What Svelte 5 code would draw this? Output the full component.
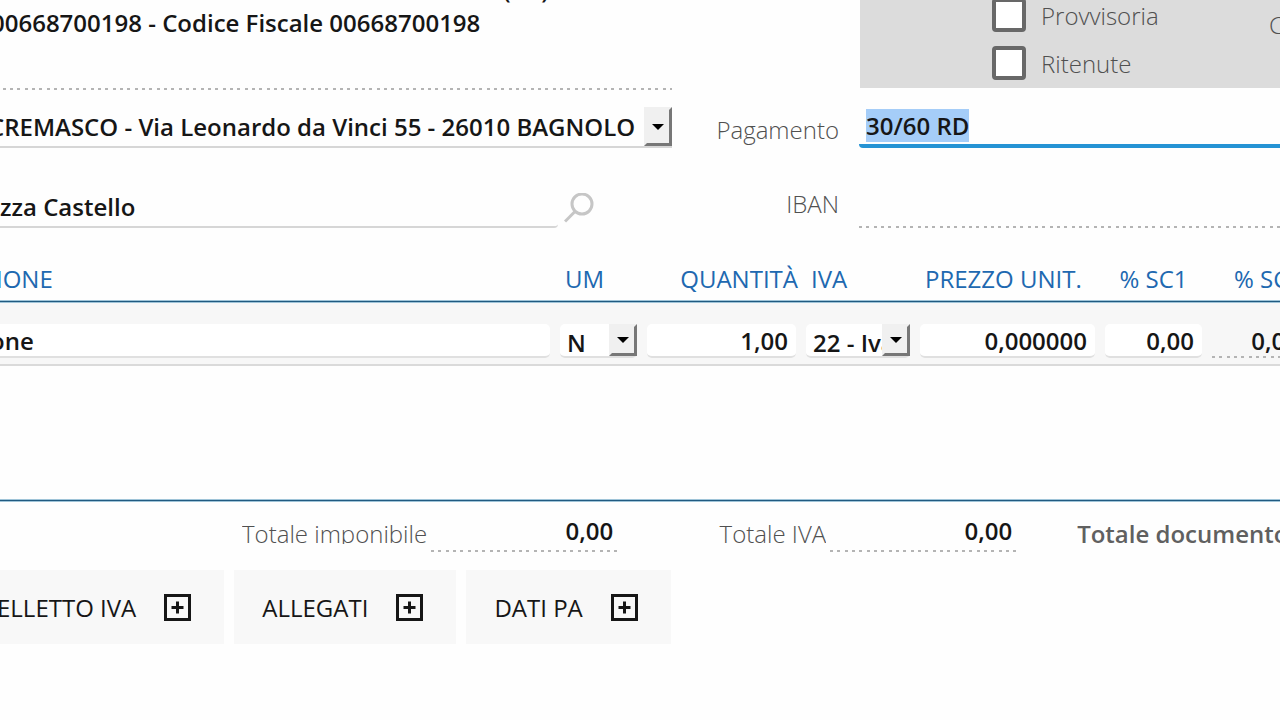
<script lang="ts">
  import { onMount } from 'svelte';

  let payment = $state('30/60 RD');
  let paymentInput: HTMLInputElement;

  const flags = $state([
    { id: 'provvisoria', label: 'Provvisoria', checked: false },
    { id: 'ritenute', label: 'Ritenute', checked: false }
  ]);

  const totals = [
    { id: 'imponibile', label: 'Totale imponibile', value: '0,00' },
    { id: 'iva', label: 'Totale IVA', value: '0,00' }
  ];

  const sections = ['ELLETTO IVA', 'ALLEGATI', 'DATI PA'];

  // The payment terms are ready to be overwritten as soon as the form opens.
  onMount(() => {
    paymentInput.focus({ preventScroll: true });
    paymentInput.select();
  });
</script>

{#snippet arrow()}
  <span class="arrow" aria-hidden="true">
    <svg width="12" height="6" viewBox="0 0 12 6"><path d="M0 0h12L6 6z" /></svg>
  </span>
{/snippet}

<main>
  <div class="sheet">
    <div class="top">
      <div class="column">
        <div class="company dotted">
          <div class="province">(CR)</div>
          <div>00668700198 - Codice Fiscale 00668700198</div>
        </div>

        <div class="select field">
          <select aria-label="Sede">
            <option>CREMASCO - Via Leonardo da Vinci 55 - 26010 BAGNOLO</option>
          </select>
          {@render arrow()}
        </div>

        <div class="destination">
          <input class="field" aria-label="Destinazione" value="zza Castello" />
          <button type="button" class="search" aria-label="Cerca">
            <svg width="30" height="30" viewBox="0 0 30 30">
              <circle cx="18" cy="11" r="10" />
              <path d="M11 18.5L1 28.5" />
            </svg>
          </button>
        </div>
      </div>

      <div class="column">
        <div class="panel">
          <div class="flags">
            {#each flags as flag (flag.id)}
              <label>
                <input type="checkbox" bind:checked={flag.checked} />
                {flag.label}
              </label>
            {/each}
          </div>
          <span class="side">C</span>
        </div>

        <div class="row">
          <label class="low" for="pagamento">Pagamento</label>
          <input
            id="pagamento"
            class="field payment"
            bind:this={paymentInput}
            bind:value={payment}
          />
        </div>

        <div class="row">
          <label for="iban">IBAN</label>
          <input id="iban" class="field dotted" readonly />
        </div>
      </div>
    </div>

    <div class="lines">
      <table>
        <colgroup>
          <col class="c-desc" />
          <col class="c-um" />
          <col class="c-qty" />
          <col class="c-iva" />
          <col class="c-price" />
          <col class="c-sc" />
          <col />
        </colgroup>
        <thead>
          <tr>
            <th class="desc">IONE</th>
            <th>UM</th>
            <th class="qty">QUANTITÀ</th>
            <th>IVA</th>
            <th>PREZZO UNIT.</th>
            <th class="center">% SC1</th>
            <th class="end">% SC2</th>
          </tr>
        </thead>
        <tbody>
          <tr>
            <td><input aria-label="Descrizione" value="one" /></td>
            <td>
              <div class="select">
                <select aria-label="UM"><option>N</option></select>
                {@render arrow()}
              </div>
            </td>
            <td><input class="num" aria-label="Quantità" value="1,00" /></td>
            <td>
              <div class="select">
                <select aria-label="IVA"><option>22 - Iva</option></select>
                {@render arrow()}
              </div>
            </td>
            <td><input class="num" aria-label="Prezzo unitario" value="0,000000" /></td>
            <td><input class="num" aria-label="Sconto 1" value="0,00" /></td>
            <td><input class="num dotted" aria-label="Sconto 2" value="0,00" readonly /></td>
          </tr>
        </tbody>
      </table>
    </div>

    <div class="totals">
      {#each totals as total (total.id)}
        <div class="total">
          <label for={total.id}>{total.label}</label>
          <output id={total.id} class="dotted">{total.value}</output>
        </div>
      {/each}
      <strong>Totale documento</strong>
    </div>

    <div class="sections">
      {#each sections as section (section)}
        <button type="button">
          {section}
          <svg width="27" height="27" viewBox="0 0 27 27" aria-hidden="true">
            <path d="M1.5 1.5h24v24h-24zM13.5 7.5v12M7.5 13.5h12" />
          </svg>
        </button>
      {/each}
    </div>
  </div>
</main>

<style>
  :global(body) {
    margin: 0;
    background: #fefefe;
  }

  main {
    overflow: clip;
    font: 400 24px/33px 'Open Sans', 'Noto Sans', sans-serif;
    color: #161616;
  }

  /* The form is larger than the visible area and runs past its edges. */
  .sheet {
    margin: -27px -32px 0 -12px;
  }

  input,
  select,
  button {
    box-sizing: border-box;
    margin: 0;
    font: inherit;
    color: inherit;
    border: 0;
    border-radius: 0;
    background: none;
    outline: none;
  }

  input,
  select {
    width: 100%;
    min-width: 0;
    font-weight: 600;
    appearance: none;
  }

  label {
    font-weight: 300;
    color: #505050;
  }

  .top {
    display: grid;
    grid-template-columns: 684px minmax(0, 1fr);
  }

  .column {
    display: flex;
    flex-direction: column;
    gap: 39px;
  }

  .field {
    box-sizing: border-box;
    height: 41px;
    border-bottom: 2px solid #d6d6d6;
  }

  .dotted {
    border-bottom: 0;
    background: repeating-linear-gradient(
        90deg,
        #b4b4b4 0 3px,
        transparent 3px 7px,
        #b4b4b4 7px 10px,
        transparent 10px 15px,
        #b4b4b4 15px 18px,
        transparent 18px 22px
      )
      bottom / 100% 2px no-repeat;
  }

  .company {
    box-sizing: border-box;
    height: 117px;
    margin-bottom: -22px;
    padding-left: 3px;
    font-weight: 600;
    white-space: nowrap;
  }

  .province {
    padding-left: 512px;
  }

  .select {
    position: relative;
  }

  .select select {
    display: block;
    height: 100%;
    padding: 0 28px 0 1px;
  }

  .arrow {
    position: absolute;
    top: 0;
    right: 0;
    bottom: 0;
    box-sizing: border-box;
    width: 28px;
    display: grid;
    place-items: center;
    border: 3px solid #777;
    border-top-color: #f0f0f0;
    border-left-color: #f0f0f0;
    background: #f0f0f0;
    pointer-events: none;
  }

  .destination {
    display: flex;
    gap: 6px;
  }

  .destination input {
    width: 570px;
    padding: 0 12px;
    border-radius: 0 0 4px 4px;
  }

  .search {
    align-self: center;
    height: 30px;
    padding: 0;
  }

  .search svg,
  .sections svg {
    display: block;
    fill: none;
  }

  .search svg {
    stroke: #c6c6c6;
    stroke-width: 3;
  }

  .panel {
    box-sizing: border-box;
    display: flex;
    align-items: flex-end;
    justify-content: space-between;
    height: 115px;
    margin: 0 0 -20px 188px;
    padding: 0 35px 8px 132px;
    background: #dcdcdc;
  }

  .flags {
    display: grid;
    gap: 14px;
  }

  .flags label {
    display: flex;
    align-items: center;
    gap: 15px;
  }

  .flags input {
    width: 34px;
    height: 34px;
    border: 4px solid #686868;
    border-radius: 4px;
    background: #fff;
  }

  .flags input:checked {
    background: #2a94d6;
  }

  .side {
    width: 8px;
    padding-bottom: 39px;
    font-weight: 300;
    color: #505050;
  }

  .row {
    display: grid;
    grid-template-columns: 167px minmax(0, 1fr);
    gap: 20px;
    text-align: right;
  }

  .row label.low {
    align-self: end;
    padding-bottom: 2px;
  }

  .row input {
    padding: 0 7px;
  }

  .payment {
    border-bottom: 4px solid #2593d4;
    border-radius: 0 0 4px 4px;
  }

  .payment::selection {
    color: #161616;
    background: #a5cdf8;
  }

  .lines {
    min-height: 240px;
    margin-top: 34px;
    box-shadow: inset 0 -1px #9fc4d8, inset 0 -2px #205a80, inset 0 -3px #9fc4d8;
  }

  table {
    width: 100%;
    table-layout: fixed;
    border-collapse: separate;
    border-spacing: 0;
  }

  .c-desc {
    width: 567px;
  }

  .c-um {
    width: 87px;
  }

  .c-qty {
    width: 159px;
  }

  .c-iva {
    width: 114px;
  }

  .c-price {
    width: 185px;
  }

  .c-sc {
    width: 107px;
  }

  thead tr {
    box-shadow: inset 0 -1px #9fc4d8, inset 0 -2px #205a80, inset 0 -3px #9fc4d8;
  }

  th {
    padding: 0 10px 8px;
    font-weight: 400;
    text-align: left;
    white-space: nowrap;
    color: #2068b0;
  }

  th.desc {
    padding-left: 8px;
  }

  th.qty {
    padding-right: 3px;
    text-align: right;
  }

  th.center {
    text-align: center;
  }

  th.end {
    text-align: right;
  }

  td {
    padding: 21px 5px 6px;
    border-bottom: 2px solid #dadada;
    background: #f7f7f7;
  }

  td:first-child {
    padding-left: 0;
  }

  td > input,
  td .select {
    display: block;
    box-sizing: border-box;
    height: 34px;
    border-bottom: 2px solid #e0e0e0;
    border-radius: 5px;
    background-color: #fff;
  }

  td > input {
    padding: 0 2px;
  }

  td > input.num {
    padding: 0 8px;
    text-align: right;
  }

  td > input.dotted {
    border-bottom: 2px solid transparent;
    border-radius: 0;
    background-color: transparent;
    background-origin: border-box;
  }

  td .select select {
    padding: 2px 27px 0 7px;
  }

  .totals {
    display: flex;
    gap: 59px;
    padding: 12px 0 0 254px;
    white-space: nowrap;
  }

  .total {
    display: flex;
    flex-shrink: 0;
    gap: 4px;
  }

  .total label,
  .totals strong {
    height: 27px;
    margin-top: 3px;
    overflow: hidden;
  }

  .total label {
    min-width: 148px;
    text-align: right;
  }

  .totals strong {
    font-weight: 600;
    color: #606060;
  }

  output {
    box-sizing: border-box;
    width: 188px;
    height: 38px;
    padding-right: 6px;
    font-weight: 600;
    text-align: right;
  }

  .sections {
    display: flex;
    gap: 10px;
    margin-top: 18px;
  }

  .sections button {
    display: flex;
    align-items: center;
    gap: 28px;
    height: 74px;
    padding: 0 33px 0 28px;
    white-space: nowrap;
    background: #f8f8f8;
  }

  .sections button:first-child {
    padding-left: 9px;
  }

  .sections svg {
    stroke: #161616;
    stroke-width: 3;
  }
</style>
